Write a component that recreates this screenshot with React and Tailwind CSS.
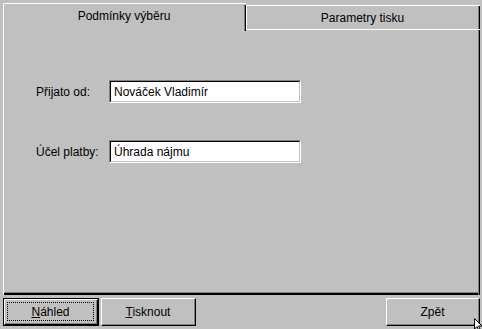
const font = { fontFamily: '"Liberation Sans", Arial, sans-serif' };

const Field = ({ label, value }) => (
  <div className="flex items-center h-[23px]">
    <div className="w-[73px] text-[12px] text-black">{label}</div>
    <div className="w-[192px] h-[23px] border-t border-l border-[#808080] border-r border-b border-r-white border-b-white">
      <div className="h-full border-t border-l border-black border-r border-b border-r-[#c0c0c0] border-b-[#c0c0c0] bg-white flex items-center pl-[3px] text-[12px] text-black">
        {value}
      </div>
    </div>
  </div>
);

const Button = ({ children, focused, className = '' }) => (
  <div className={`h-[28px] ${focused ? 'border border-black' : ''} ${className}`}>
    <div className="h-full border-t border-l border-white border-r border-b border-r-black border-b-black">
      <div className="h-full border-r border-b border-r-[#808080] border-b-[#808080] flex items-center justify-center p-[2px]">
        <div className={`w-full h-full flex items-center justify-center text-[12px] text-black ${focused ? 'border border-dotted border-black' : ''}`}>
          {children}
        </div>
      </div>
    </div>
  </div>
);

export default function App() {
  return (
    <div className="relative w-[482px] h-[329px] bg-[#c0c0c0] flex flex-col pl-[3px] pr-[2px] pt-[3px] overflow-hidden" style={font}>
      <div className="flex items-end h-[27px]">
        <div className="w-[243px] h-[27px] border-t border-l border-white rounded-tl-[2px] flex">
          <div className="flex-1 flex items-center justify-center text-[12px] text-black pb-[2px]">Podmínky výběru</div>
          <div className="w-[2px] h-full border-l border-[#808080] bg-black mt-[1px]" />
        </div>
        <div className="flex-1 h-[25px] border-t border-b border-white flex">
          <div className="w-px h-full bg-white" />
          <div className="flex-1 flex items-center justify-center text-[12px] text-black">Parametry tisku</div>
          <div className="w-[2px] h-full border-l border-[#808080] bg-black" />
        </div>
      </div>
      <div className="h-[265px] border-l border-white flex">
        <div className="flex-1 flex flex-col border-b-2 border-b-black">
          <div className="flex-1 border-b border-[#808080] pl-[32px] pt-[50px] flex flex-col gap-[37px]">
            <Field label="Přijato od:" value="Nováček Vladimír" />
            <Field label="Účel platby:" value="Úhrada nájmu" />
          </div>
        </div>
        <div className="w-[2px] border-l border-[#808080] bg-black" />
      </div>
      <div className="flex mt-[3px]">
        <Button focused className="w-[96px]">
          <span><span className="underline">N</span>áhled</span>
        </Button>
        <Button className="w-[95px] ml-[2px]">
          <span><span className="underline">T</span>isknout</span>
        </Button>
        <div className="flex-1" />
        <Button className="w-[94px]">Zpět</Button>
      </div>
      <svg className="absolute left-[474px] top-[318px]" width="10" height="14" viewBox="0 0 10 14">
        <path d="M0.5 0.5 L0.5 11 L3 8.5 L5 13 L6.5 12.3 L4.6 8 L8 8 Z" fill="white" stroke="black" strokeWidth="1" />
      </svg>
    </div>
  );
}
